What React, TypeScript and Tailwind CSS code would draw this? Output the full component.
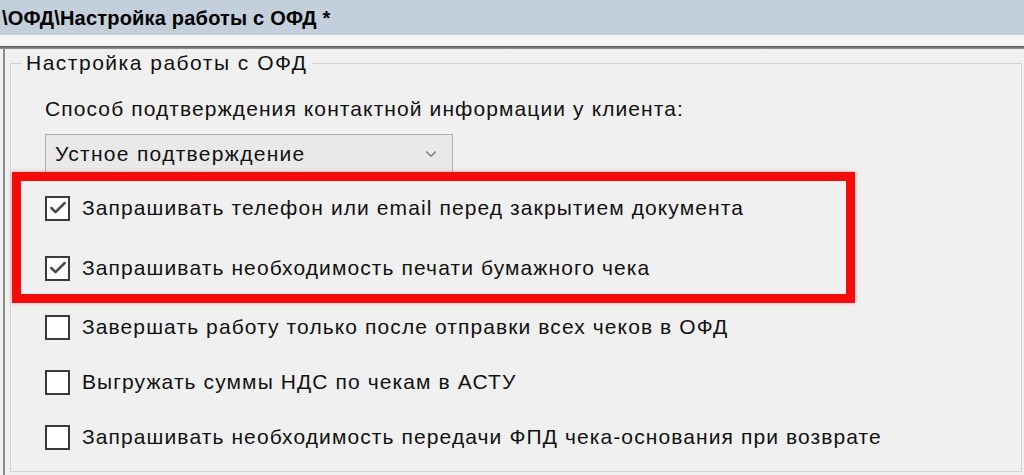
import { Check, ChevronDown } from 'lucide-react';

type Option = { label: string; checked: boolean };

const FRAMED: Option[] = [
  { label: 'Запрашивать телефон или email перед закрытием документа', checked: true },
  { label: 'Запрашивать необходимость печати бумажного чека', checked: true },
];

const REST: Option[] = [
  { label: 'Завершать работу только после отправки всех чеков в ОФД', checked: false },
  { label: 'Выгружать суммы НДС по чекам в АСТУ', checked: false },
  { label: 'Запрашивать необходимость передачи ФПД чека-основания при возврате', checked: false },
];

function CheckRow({ label, checked }: Option) {
  return (
    <div className="flex items-center gap-[12px]">
      <div className="w-[25px] h-[25px] shrink-0 border-2 border-[#3a3a3a] bg-white flex items-center justify-center">
        {checked && <Check className="w-[20px] h-[20px] text-[#4a4a4a]" strokeWidth={3} />}
      </div>
      <span className="text-[21px] leading-[24px] tracking-[1.1px] text-[#111]">{label}</span>
    </div>
  );
}

export default function App() {
  return (
    <div className="w-[1024px] h-[475px] overflow-hidden bg-[#f0f0f0] font-['Liberation_Sans',Arial,sans-serif] flex flex-col">
      {/* Title bar */}
      <div className="h-[35px] shrink-0 bg-[#c3d0dc] flex items-center pl-[2px]">
        <span className="text-[20px] font-bold tracking-[0.2px] text-black">\ОФД\Настройка работы с ОФД *</span>
      </div>
      <div className="h-[11px] shrink-0 bg-[#f6f6f6]" />
      <div className="h-[3px] shrink-0 bg-gradient-to-b from-[#555] to-[#9a9a9a]" />

      {/* Body */}
      <div className="flex-1 ml-[3px] border-l-2 border-[#8a8a8a] pl-[5px] pr-[2px]">
        <fieldset className="mt-[2px] border border-[#d4d4d4] h-[421px]">
          <legend className="ml-[11px] px-[4px] text-[21px] leading-[24px] tracking-[1.5px] text-[#111]">
            Настройка работы с ОФД
          </legend>

          <div className="pl-[34px] pt-[22px]">
            <div className="text-[21px] leading-[24px] tracking-[1.1px] text-[#111]">
              Способ подтверждения контактной информации у клиента:
            </div>
            <div className="mt-[13px] w-[408px] h-[39px] border border-[#adadad] bg-[#e9e9e9] flex items-center justify-between pl-[9px] pr-[12px]">
              <span className="text-[21px] leading-[24px] tracking-[1.3px] text-[#111]">Устное подтверждение</span>
              <ChevronDown className="w-[18px] h-[18px] text-[#707070]" strokeWidth={1.5} />
            </div>
          </div>

          {/* Highlighted options */}
          <div className="-mt-[1px] ml-[1px] w-[843px] border-[9px] border-[#f40b0b] shadow-[0_0_4px_rgba(255,80,80,0.45)] pl-[24px] pt-px flex flex-col gap-[8px]">
            {FRAMED.map((o) => (
              <div key={o.label} className="h-[52px] flex items-center">
                <CheckRow {...o} />
              </div>
            ))}
          </div>

          <div className="pl-[34px] pt-[1px] flex flex-col gap-[9px]">
            {REST.map((o) => (
              <div key={o.label} className="h-[46px] flex items-center">
                <CheckRow {...o} />
              </div>
            ))}
          </div>
        </fieldset>
      </div>
    </div>
  );
}
